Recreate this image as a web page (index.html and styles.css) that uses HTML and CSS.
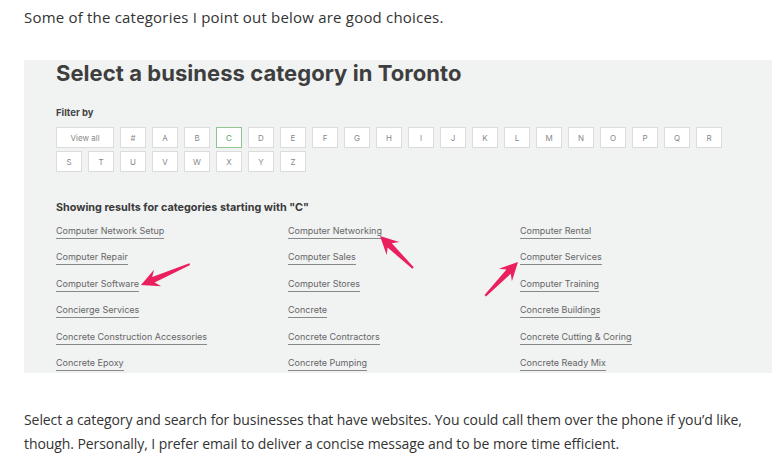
FILE: index.html
```html
<!DOCTYPE html>
<html>
<head>
<meta charset="utf-8">
<link rel="stylesheet" href="styles.css">
</head>
<body>
<p class="intro">Some of the categories I point out below are good choices.</p>
<div class="panel">
  <h1 class="title">Select a business category in Toronto</h1>
  <div class="filter-label">Filter by</div>
  <div class="letters">
    <span class="btn wide">View all</span><span class="btn">#</span><span class="btn">A</span><span class="btn">B</span><span class="btn active">C</span><span class="btn">D</span><span class="btn">E</span><span class="btn">F</span><span class="btn">G</span><span class="btn">H</span><span class="btn">I</span><span class="btn">J</span><span class="btn">K</span><span class="btn">L</span><span class="btn">M</span><span class="btn">N</span><span class="btn">O</span><span class="btn">P</span><span class="btn">Q</span><span class="btn">R</span>
    <span class="btn">S</span><span class="btn">T</span><span class="btn">U</span><span class="btn">V</span><span class="btn">W</span><span class="btn">X</span><span class="btn">Y</span><span class="btn">Z</span>
  </div>
  <div class="results-label">Showing results for categories starting with "C"</div>
  <div class="links">
    <a class="link">Computer Network Setup</a><a class="link">Computer Networking</a><a class="link">Computer Rental</a>
    <a class="link">Computer Repair</a><a class="link">Computer Sales</a><a class="link">Computer Services</a>
    <a class="link">Computer Software</a><a class="link">Computer Stores</a><a class="link">Computer Training</a>
    <a class="link">Concierge Services</a><a class="link">Concrete</a><a class="link">Concrete Buildings</a>
    <a class="link">Concrete Construction Accessories</a><a class="link">Concrete Contractors</a><a class="link">Concrete Cutting &amp; Coring</a>
    <a class="link">Concrete Epoxy</a><a class="link">Concrete Pumping</a><a class="link">Concrete Ready Mix</a>
  </div>
</div>
<p class="outro">Select a category and search for businesses that have websites. You could call them over the phone if you’d like, though. Personally, I prefer email to deliver a concise message and to be more time efficient.</p>
<svg class="arrows" width="783" height="472" viewBox="0 0 783 472">
  <g transform="translate(141 285) rotate(156.8)">
    <polygon class="arrow" points="0,0 -18,-9 -13.5,-3 -53,-1 -53,1 -13.5,3 -18,9"/>
  </g>
  <g transform="translate(380 236) rotate(-135.9)">
    <polygon class="arrow" points="0,0 -18,-9 -13.5,-3 -46,-1 -46,1 -13.5,3 -18,9"/>
  </g>
  <g transform="translate(518 262) rotate(-45.85)">
    <polygon class="arrow" points="0,0 -18,-9 -13.5,-3 -47,-1 -47,1 -13.5,3 -18,9"/>
  </g>
</svg>
</body>
</html>
```
FILE: styles.css
```css
* { box-sizing: border-box; }
html, body { margin: 0; padding: 0; background: #fff; }
body {
  position: relative;
  width: 783px;
  height: 472px;
  overflow: hidden;
  padding-top: 5px;
  font-family: "Open Sans", "Noto Sans", sans-serif;
  color: #333;
}
.intro {
  margin: 0 0 0 24px;
  font-size: 15px;
  letter-spacing: 0.2px;
  line-height: 24px;
}
.panel {
  margin: 31px 11px 0 24px;
  height: 313px;
  background: #f1f2f2;
  padding: 0 0 0 32px;
  font-family: "Inter", "Liberation Sans", sans-serif;
  overflow: hidden;
}
.title {
  margin: 0;
  font-size: 22px;
  line-height: 26px;
  font-weight: 700;
  color: #3e3e3e;
  letter-spacing: 0.05px;
}
.filter-label {
  margin-top: 20px;
  font-size: 9.5px;
  line-height: 14px;
  font-weight: 700;
  color: #444;
}
.letters {
  margin-top: 7px;
  display: flex;
  flex-wrap: wrap;
  column-gap: 6px;
  row-gap: 3px;
  width: 680px;
}
.btn {
  width: 26px;
  height: 21px;
  background: #fff;
  border: 1px solid #dcdcdc;
  display: flex;
  align-items: center;
  justify-content: center;
  font-size: 8px;
  color: #888;
}
.btn.wide { width: 58px; }
.btn.active { border-color: #8fc58f; color: #5aa55a; }
.results-label {
  margin-top: 29px;
  font-size: 10.8px;
  line-height: 14px;
  font-weight: 700;
  color: #3a3a3a;
}
.links {
  margin-top: 10px;
  display: grid;
  grid-template-columns: 232px 232px 232px;
  row-gap: 12.4px;
}
.link {
  justify-self: start;
  font-size: 9px;
  line-height: 12px;
  color: #666;
  border-bottom: 1px solid #888;
  height: 14px;
}
.outro {
  margin: 35px 12px 0 24px;
  font-size: 14px;
  letter-spacing: -0.08px;
  line-height: 24px;
}
.arrows {
  position: absolute;
  left: 0;
  top: 0;
  pointer-events: none;
}
.arrow { fill: #ea1f5e; }
```
